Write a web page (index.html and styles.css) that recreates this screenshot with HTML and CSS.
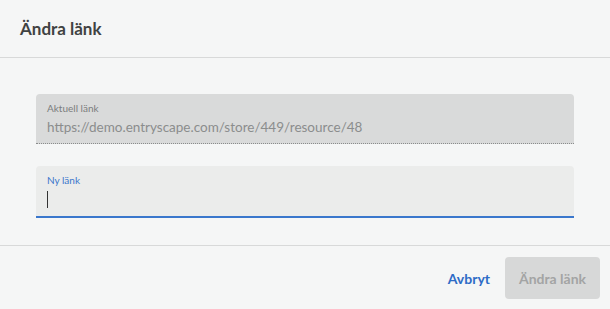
FILE: index.html
```html
<!DOCTYPE html>
<html lang="sv">
<head>
    <meta charset="UTF-8">
    <meta name="viewport" content="width=device-width, initial-scale=1.0">
    <title>Ändra länk</title>
    <link rel="stylesheet" href="styles.css">
</head>
<body>
    <div class="dialog">
        <div class="dialog-header">
            <h2>Ändra länk</h2>
        </div>

        <div class="dialog-body">
            <div class="field field-disabled">
                <label>Aktuell länk</label>
                <div class="field-value">https://demo.entryscape.com/store/449/resource/48</div>
            </div>
            <div class="field field-focused">
                <label>Ny länk</label>
                <div class="field-value"><span class="caret"></span></div>
            </div>
        </div>

        <div class="dialog-footer">
            <button class="btn-text">Avbryt</button>
            <button class="btn-primary" disabled>Ändra länk</button>
        </div>
    </div>
</body>
</html>
```

FILE: styles.css
```css
body {
    margin: 0;
    background-color: #f5f6f6;
    font-family: "Lato", "Liberation Sans", sans-serif;
}
.dialog-header {
    height: 57px;
    padding: 0 20px;
    display: flex;
    align-items: center;
    border-bottom: 1px solid #d8d9d9;
}
.dialog-header h2 {
    margin: 0;
    font-size: 17px;
    font-weight: bold;
    color: #404242;
}
.dialog-body {
    padding: 36px 36px 27px;
    display: flex;
    flex-direction: column;
    gap: 22px;
    border-bottom: 1px solid #d8d9d9;
}
.field {
    height: 50px;
    box-sizing: border-box;
    padding: 8px 11px 0;
    border-radius: 4px 4px 0 0;
}
.field label {
    display: block;
    font-size: 10px;
    line-height: 12px;
}
.field-value {
    font-size: 13.5px;
    line-height: 20px;
    margin-top: 3px;
}
.field-disabled {
    background-color: #d9dada;
    border-bottom: 1px dotted #8a8c8c;
}
.field-disabled label {
    color: #7b7d7d;
}
.field-disabled .field-value {
    color: #8b8d8d;
}
.field-focused {
    height: 52px;
    background-color: #ebeceb;
    border-bottom: 2px solid #3a77cc;
}
.field-focused label {
    color: #3a77cc;
}
.caret {
    display: inline-block;
    width: 1px;
    height: 17px;
    margin-top: 2px;
    background-color: #333;
    vertical-align: top;
}
.dialog-footer {
    padding: 11px 10px 10px;
    display: flex;
    justify-content: flex-end;
    align-items: center;
    gap: 15px;
}
.btn-text {
    background: none;
    border: none;
    padding: 0;
    font-family: inherit;
    font-size: 14px;
    font-weight: bold;
    color: #2d6bc6;
    cursor: pointer;
}
.btn-primary {
    width: 95px;
    height: 42px;
    border: none;
    border-radius: 4px;
    background-color: #d7d8d8;
    font-family: inherit;
    font-size: 14px;
    font-weight: bold;
    color: #a3a4a4;
}
```
